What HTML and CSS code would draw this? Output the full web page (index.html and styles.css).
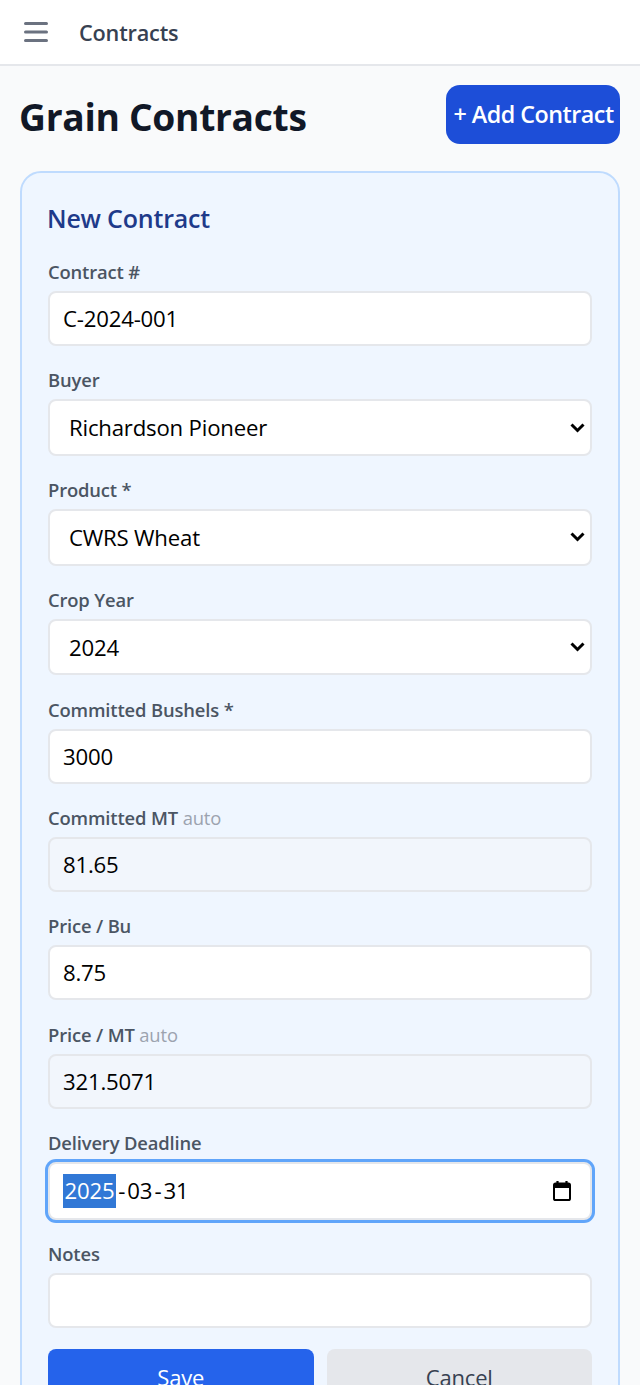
FILE: index.html
```html
<!DOCTYPE html>
<html lang="en">
<head>
<meta charset="utf-8">
<title>Contracts</title>
<link rel="stylesheet" href="styles.css">
</head>
<body>
<div class="page">
  <header class="topbar">
    <button class="menu" type="button" aria-label="Menu">
      <svg viewBox="0 0 26 24" width="26" height="24"><path d="M2.5 3.5h21M2.5 12h21M2.5 20.5h21" fill="none" stroke="#6b7280" stroke-width="3" stroke-linecap="round"/></svg>
    </button>
    <span class="topbar-title">Contracts</span>
  </header>
  <main class="content">
    <div class="title-row">
      <h1>Grain Contracts</h1>
      <button class="add" type="button">+ Add Contract</button>
    </div>
    <form class="card">
      <h2>New Contract</h2>
      <div class="fields">
        <div class="field"><label>Contract #</label><input class="ctl" type="text" value="C-2024-001"></div>
        <div class="field"><label>Buyer</label><select class="ctl sel"><option>Richardson Pioneer</option></select></div>
        <div class="field"><label>Product *</label><select class="ctl sel"><option>CWRS Wheat</option></select></div>
        <div class="field"><label>Crop Year</label><select class="ctl sel"><option>2024</option></select></div>
        <div class="field"><label>Committed Bushels *</label><input class="ctl" type="text" value="3000"></div>
        <div class="field"><label>Committed MT <span class="auto">auto</span></label><input class="ctl ro" type="text" value="81.65" readonly></div>
        <div class="field"><label>Price / Bu</label><input class="ctl" type="text" value="8.75"></div>
        <div class="field"><label>Price / MT <span class="auto">auto</span></label><input class="ctl ro" type="text" value="321.5071" readonly></div>
        <div class="field"><label>Delivery Deadline</label>
          <div class="ctl date">
            <span class="date-val"><span class="hl">2025</span><span class="sep">-</span>03<span class="sep">-</span>31</span>
            <svg class="cal" viewBox="0 0 18 20" width="18" height="20"><path d="M4.5 0v3M13.5 0v3" stroke="#000" stroke-width="2.2" fill="none"/><rect x="1" y="2.6" width="16" height="16.4" rx="1.6" fill="none" stroke="#000" stroke-width="2"/><rect x="1" y="2.6" width="16" height="4.4" fill="#000"/></svg>
          </div>
        </div>
        <div class="field"><label>Notes</label><input class="ctl" type="text"></div>
      </div>
      <div class="actions">
        <button class="btn save" type="button">Save</button>
        <button class="btn cancel" type="button">Cancel</button>
      </div>
    </form>
  </main>
</div>
</body>
</html>
```
FILE: styles.css
```css
* { box-sizing: border-box; }
html, body { margin: 0; height: 1385px; overflow: hidden; }
body { font-family: "Open Sans", "Noto Sans", sans-serif; background: #f9fafb; }
.page { height: 1385px; overflow: hidden; }
.topbar { height: 66px; background: #fff; border-bottom: 2px solid #e5e7eb; display: flex; align-items: center; padding-left: 23px; gap: 30px; }
.menu { border: 0; background: none; padding: 0; width: 26px; height: 24px; display: block; }
.menu svg { display: block; }
.topbar-title { font-size: 21.7px; font-weight: 600; color: #374151; letter-spacing: -0.2px; }
.content { padding: 19px 20px 0; }
.title-row { display: flex; justify-content: space-between; align-items: center; height: 59px; margin-bottom: 27px; }
h1 { margin: 0 0 0 -1px; padding-top: 4px; font-size: 37.2px; line-height: 58px; font-weight: 700; color: #111827; letter-spacing: -0.3px; }
.add { width: 174px; height: 59px; border: 0; border-radius: 14px; background: #1d4ed8; color: #fff; font: 600 23.3px "Open Sans", sans-serif; padding: 0 0 1px 1px; letter-spacing: -0.5px; white-space: nowrap; }
.card { border: 2px solid #bfdbfe; border-radius: 21px; background: #eff6ff; padding: 25px 26px 40px; }
h2 { margin: 0 0 20px -1px; font-size: 25px; line-height: 40px; font-weight: 600; color: #1e3a8a; letter-spacing: -0.2px; }
.fields { display: flex; flex-direction: column; gap: 20.3px; }
.field { display: flex; flex-direction: column; gap: 6px; }
label { font-size: 18.4px; line-height: 27px; font-weight: 600; color: #4b5563; letter-spacing: -0.15px; }
.auto { font-weight: 400; color: #9ca3af; }
.ctl { width: 100%; height: 55px; border: 2px solid #e5e7eb; border-radius: 8px; background: #fff; padding: 0 13px; font: 400 22.2px "Open Sans", sans-serif; color: #000; letter-spacing: -0.2px; outline: 0; display: block; }
.sel { height: 56.5px; appearance: none; padding-left: 19px; background: #fff url("data:image/svg+xml,%3Csvg xmlns='http://www.w3.org/2000/svg' viewBox='0 0 15 10'%3E%3Cpath d='M1.5 1.5l6 6 6-6' fill='none' stroke='%23000' stroke-width='3'/%3E%3C/svg%3E") no-repeat right 5px center / 15px 10px; }
.ro { background: #f2f6fc; }
.date { height: 58px; display: flex; align-items: center; justify-content: space-between; padding: 0 19px 0 13px; border-color: #e5e7eb; border-radius: 8px; box-shadow: 0 0 0 3px #60a5fa; }
.date-val { line-height: 34px; }
.hl { background: #3178d6; color: #fff; display: inline-block; padding: 0 1.5px; }
.sep { margin: 0 2.2px; }
.cal { display: block; }
.actions { display: grid; grid-template-columns: 1fr 1fr; gap: 13px; margin-top: 21px; }
.btn { height: 60px; border: 0; border-radius: 8px; font: 400 22px "Open Sans", sans-serif; letter-spacing: -0.2px; padding: 0 0 5px; }
.save { background: #2563eb; color: #fff; }
.cancel { background: #e5e7eb; color: #374151; }
```
